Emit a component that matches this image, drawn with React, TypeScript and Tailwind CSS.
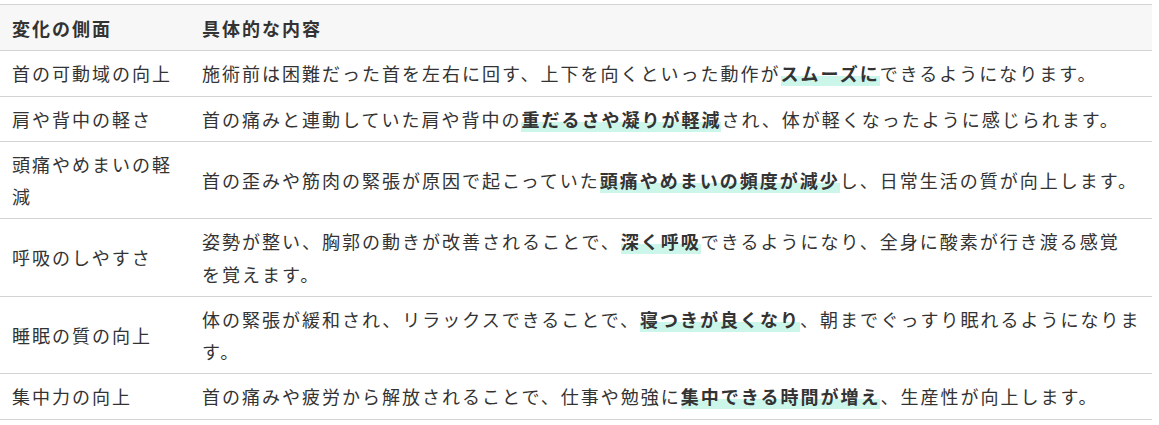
const rows: { aspect: string; before: string; mark: string; after: React.ReactNode }[] = [
  {
    aspect: "首の可動域の向上",
    before: "施術前は困難だった首を左右に回す、上下を向くといった動作が",
    mark: "スムーズに",
    after: "できるようになります。",
  },
  {
    aspect: "肩や背中の軽さ",
    before: "首の痛みと連動していた肩や背中の",
    mark: "重だるさや凝りが軽減",
    after: "され、体が軽くなったように感じられます。",
  },
  {
    aspect: "頭痛やめまいの軽減",
    before: "首の歪みや筋肉の緊張が原因で起こっていた",
    mark: "頭痛やめまいの頻度が減少",
    after: "し、日常生活の質が向上します。",
  },
  {
    aspect: "呼吸のしやすさ",
    before: "姿勢が整い、胸郭の動きが改善されることで、",
    mark: "深く呼吸",
    after: (
      <>
        できるようになり、全身に酸素が行き渡る感覚
        <br />
        を覚えます。
      </>
    ),
  },
  {
    aspect: "睡眠の質の向上",
    before: "体の緊張が緩和され、リラックスできることで、",
    mark: "寝つきが良くなり",
    after: "、朝までぐっすり眠れるようになります。",
  },
  {
    aspect: "集中力の向上",
    before: "首の痛みや疲労から解放されることで、仕事や勉強に",
    mark: "集中できる時間が増え",
    after: "、生産性が向上します。",
  },
];

export default function App() {
  return (
    <div className="bg-white pt-[4px] font-['Noto_Sans_CJK_JP',sans-serif] text-[18px] leading-[32.25px] tracking-[2px] text-[#333]">
      <table className="w-[1152px] border-collapse">
        <thead>
          <tr className="bg-[#f7f7f7] border-y border-[#d4d4d4]">
            <th className="w-[190px] pl-[12px] pr-[8px] py-[6.5px] text-left font-bold">変化の側面</th>
            <th className="pl-[12px] pr-[8px] py-[6.5px] text-left font-bold">具体的な内容</th>
          </tr>
        </thead>
        <tbody>
          {rows.map((r) => (
            <tr key={r.aspect} className="border-b border-[#d4d4d4]">
              <td className="pl-[12px] pr-[8px] py-[6px] align-middle">{r.aspect}</td>
              <td className="pl-[12px] pr-[8px] py-[6px] align-middle">
                {r.before}
                <strong className="font-bold bg-[linear-gradient(transparent_62%,#cdf6ea_62%)]">{r.mark}</strong>
                {r.after}
              </td>
            </tr>
          ))}
        </tbody>
      </table>
    </div>
  );
}
